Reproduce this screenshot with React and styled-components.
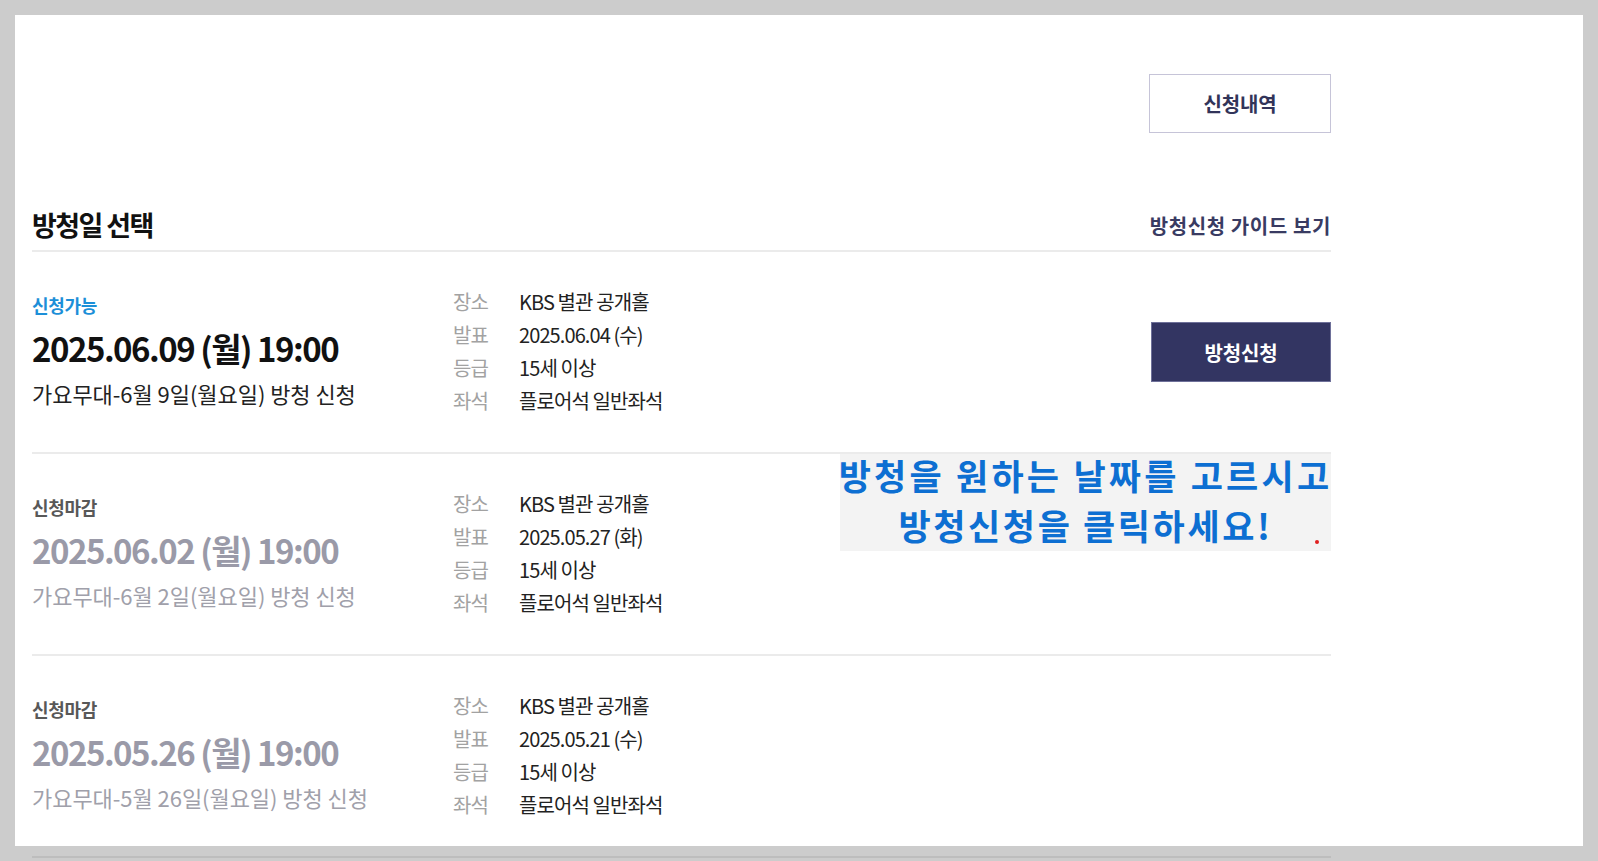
import React from 'react';
import styled, { createGlobalStyle } from 'styled-components';

const GlobalStyle = createGlobalStyle`
  html, body {
    margin: 0;
    padding: 0;
    background: #cccccc;
  }
  body {
    font-family: 'Noto Sans CJK KR', 'Noto Sans', sans-serif;
    color: #222;
  }
  * {
    box-sizing: border-box;
  }
`;

const Page = styled.div`
  padding: 15px;
  height: 861px;
  overflow: hidden;
`;

const Panel = styled.div`
  width: 1568px;
  height: 831px;
  background: #fff;
  padding-left: 17px;
`;

const Content = styled.div`
  width: 1299px;
`;

const TopBar = styled.div`
  display: flex;
  justify-content: flex-end;
  padding-top: 59px;
`;

const HistoryButton = styled.button`
  width: 182px;
  height: 59px;
  background: #fff;
  border: 1px solid #c6c4d8;
  color: #323459;
  font-family: inherit;
  font-size: 20px;
  font-weight: 700;
  letter-spacing: -0.2px;
  cursor: pointer;
`;

const Header = styled.div`
  display: flex;
  justify-content: space-between;
  align-items: flex-end;
  margin-top: 74px;
  padding-bottom: 7px;
  border-bottom: 2px solid #ebebeb;
`;

const Title = styled.h2`
  margin: 0;
  font-size: 27px;
  line-height: 36px;
  font-weight: 700;
  letter-spacing: -1.6px;
  color: #111;
`;

const GuideLink = styled.a`
  font-size: 20px;
  line-height: 30px;
  font-weight: 700;
  letter-spacing: 0.6px;
  color: #393b62;
  text-decoration: none;
  margin-bottom: 2px;
`;

const Row = styled.div`
  position: relative;
  display: flex;
  align-items: center;
  height: 202px;
  border-bottom: 2px solid #ebebeb;
  &:last-child {
    border-bottom-color: #bdbdbd;
  }
`;

const DateBlock = styled.div`
  width: 421px;
  flex-shrink: 0;
  margin-top: -3px;
`;

const Status = styled.div`
  font-size: 18px;
  line-height: 24px;
  font-weight: 700;
  letter-spacing: -0.3px;
  color: ${p => (p.$open ? '#1c8fd8' : '#585858')};
`;

const DateText = styled.div`
  margin-top: 12px;
  font-size: 33px;
  line-height: 38px;
  font-weight: 700;
  letter-spacing: -1.5px;
  color: ${p => (p.$open ? '#111' : '#9a9aa8')};
`;

const SubText = styled.div`
  margin-top: 11px;
  font-size: 22px;
  line-height: 30px;
  letter-spacing: -0.05px;
  color: ${p => (p.$open ? '#222' : '#a0a0aa')};
`;

const InfoList = styled.dl`
  margin: 0;
  display: grid;
  grid-template-columns: 66px auto;
  font-size: 20px;
  line-height: 32.8px;
  letter-spacing: -0.9px;
`;

const InfoLabel = styled.dt`
  color: #a2a2a2;
`;

const InfoValue = styled.dd`
  margin: 0;
  color: #222;
`;

const ApplyButton = styled.button`
  margin-left: auto;
  width: 180px;
  height: 60px;
  background: #333562;
  border: 1px solid #6e7099;
  color: #fff;
  font-family: inherit;
  font-size: 20px;
  font-weight: 700;
  letter-spacing: -0.2px;
  cursor: pointer;
`;

const Notice = styled.div`
  position: absolute;
  top: 0;
  right: 0;
  width: 491px;
  height: 97px;
  padding-bottom: 6px;
  background: #f3f3f3;
  display: flex;
  flex-direction: column;
  align-items: center;
  justify-content: center;
  font-size: 35px;
  line-height: 50px;
  font-weight: 700;
  letter-spacing: 3.2px;
  white-space: nowrap;
  color: #0d6fd2;
  text-align: center;
`;

const NoticeLine = styled.div`
  letter-spacing: ${p => (p.$tight ? '2.6px' : '3.2px')};
`;

const RedDot = styled.span`
  position: absolute;
  right: 12px;
  bottom: 7px;
  width: 4px;
  height: 4px;
  border-radius: 50%;
  background: #e02020;
`;

const sessions = [
  {
    id: 1,
    open: true,
    date: '2025.06.09 (월) 19:00',
    title: '가요무대-6월 9일(월요일) 방청 신청',
    notice: '2025.06.04 (수)',
  },
  {
    id: 2,
    open: false,
    date: '2025.06.02 (월) 19:00',
    title: '가요무대-6월 2일(월요일) 방청 신청',
    notice: '2025.05.27 (화)',
    hint: true,
  },
  {
    id: 3,
    open: false,
    date: '2025.05.26 (월) 19:00',
    title: '가요무대-5월 26일(월요일) 방청 신청',
    notice: '2025.05.21 (수)',
  },
];

export default function App() {
  return (
    <>
      <GlobalStyle />
      <Page>
        <Panel>
          <Content>
            <TopBar>
              <HistoryButton>신청내역</HistoryButton>
            </TopBar>
            <Header>
              <Title>방청일 선택</Title>
              <GuideLink href="#">방청신청 가이드 보기</GuideLink>
            </Header>
            {sessions.map(s => (
              <Row key={s.id}>
                <DateBlock>
                  <Status $open={s.open}>{s.open ? '신청가능' : '신청마감'}</Status>
                  <DateText $open={s.open}>{s.date}</DateText>
                  <SubText $open={s.open}>{s.title}</SubText>
                </DateBlock>
                <InfoList>
                  <InfoLabel>장소</InfoLabel>
                  <InfoValue>KBS 별관 공개홀</InfoValue>
                  <InfoLabel>발표</InfoLabel>
                  <InfoValue>{s.notice}</InfoValue>
                  <InfoLabel>등급</InfoLabel>
                  <InfoValue>15세 이상</InfoValue>
                  <InfoLabel>좌석</InfoLabel>
                  <InfoValue>플로어석 일반좌석</InfoValue>
                </InfoList>
                {s.open && <ApplyButton>방청신청</ApplyButton>}
                {s.hint && (
                  <Notice>
                    <NoticeLine>방청을 원하는 날짜를 고르시고</NoticeLine>
                    <NoticeLine $tight>방청신청을 클릭하세요!</NoticeLine>
                    <RedDot />
                  </Notice>
                )}
              </Row>
            ))}
          </Content>
        </Panel>
      </Page>
    </>
  );
}
